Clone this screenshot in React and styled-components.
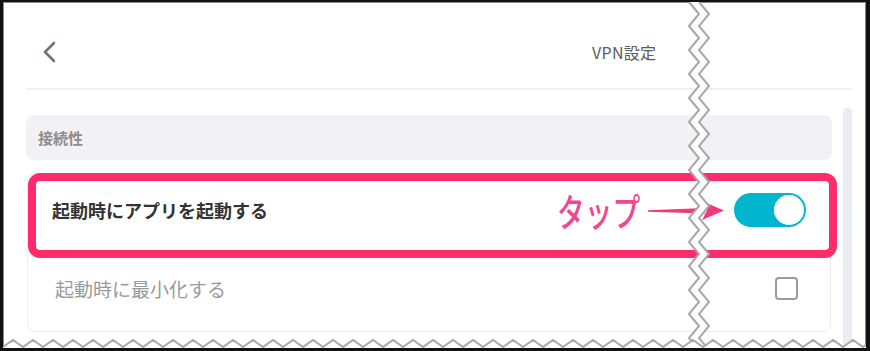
import React from "react";
import styled, { createGlobalStyle } from "styled-components";

const GlobalStyle = createGlobalStyle`
  body {
    margin: 0;
    background: #fff;
    font-family: "Noto Sans CJK JP", "Noto Sans", sans-serif;
  }
`;

const Frame = styled.div`
  position: relative;
  width: 870px;
  height: 351px;
  box-sizing: border-box;
  border-style: solid;
  border-color: #111;
  border-width: 2px 4px 3px 3px;
  box-shadow: inset 1px 1px 0 #8a8a8a, inset -1px 0 0 #8a8a8a;
  background: #fff;
  overflow: hidden;
`;

const Screen = styled.div`
  display: flex;
  flex-direction: column;
  height: 100%;
  padding: 0 14px 0 23px;
`;

const Header = styled.header`
  display: flex;
  align-items: center;
  height: 72px;
  padding: 14px 0 0 16px;
  border-bottom: 2px solid #f1f1f5;
`;

const BackIcon = styled.svg`
  width: 14px;
  height: 22px;
  flex-shrink: 0;
`;

const Title = styled.h1`
  margin: 0 0 0 536px;
  font-size: 16px;
  font-weight: 400;
  letter-spacing: 0.3px;
  color: #5c5c5c;
`;

const Body = styled.div`
  display: flex;
  gap: 11px;
  flex: 1;
`;

const Column = styled.div`
  width: 806px;
  padding-top: 25px;
`;

const ScrollTrack = styled.div`
  width: 9px;
  margin-top: 18px;
  flex-shrink: 0;
  border-radius: 4px 4px 0 0;
  background: #e9ecf0;
`;

const SectionHeader = styled.div`
  display: flex;
  align-items: center;
  height: 45px;
  padding-left: 12px;
  border-radius: 8px;
  background: #f2f2f6;
  font-size: 15px;
  font-weight: 700;
  color: #8d8d8d;
`;

const Card = styled.div`
  margin: 13px 1px 0;
  border: 1px solid #eceef3;
  border-radius: 8px;
  background: #fff;
`;

const Row = styled.div`
  position: relative;
  display: flex;
  align-items: center;
  justify-content: space-between;
  height: ${(p) => p.$h}px;
  padding: 0 ${(p) => p.$pr}px 0 ${(p) => p.$pl}px;
`;

const Label = styled.span`
  font-size: ${(p) => (p.$muted ? 19 : 18)}px;
  font-weight: ${(p) => (p.$muted ? 400 : 700)};
  color: ${(p) => (p.$muted ? "#9a9a9a" : "#333")};
`;

const Toggle = styled.div`
  display: flex;
  justify-content: flex-end;
  align-items: center;
  width: 72px;
  height: 34px;
  padding: 0 2px;
  box-sizing: border-box;
  border-radius: 17px;
  background: #00b5cd;
`;

const Knob = styled.div`
  width: 30px;
  height: 30px;
  border-radius: 50%;
  background: #fff;
  box-shadow: inset 0 0 0 1px #d9f2f6;
`;

const Checkbox = styled.div`
  width: 23px;
  height: 23px;
  box-sizing: border-box;
  border: 2px solid #9b9b9b;
  border-radius: 4px;
`;

const Highlight = styled.div`
  position: absolute;
  inset: -1px -7px -12px 0;
  border: 8px solid #ff2b6b;
  border-radius: 12px;
  pointer-events: none;
`;

const TapLabel = styled.span`
  position: absolute;
  left: 529px;
  top: 17px;
  font-size: 38px;
  font-weight: 500;
  line-height: 1;
  color: #f2468f;
  white-space: nowrap;
  transform: scaleX(0.73);
  transform-origin: left center;
`;

const Arrow = styled.svg`
  position: absolute;
  left: 619px;
  top: 26px;
  width: 78px;
  height: 22px;
`;

const ZigzagV = styled.svg`
  position: absolute;
  top: 0;
  left: 683px;
  width: 26px;
  height: 100%;
`;

const ZigzagH = styled.svg`
  position: absolute;
  left: 0;
  bottom: 0;
  width: 100%;
  height: 10px;
`;

function verticalZig() {
  const left = [];
  const right = [];
  for (let i = 0; i <= 30; i++) {
    const y = i * 12;
    const x = i % 2 === 0 ? 3 : 13;
    left.push(`${x},${y}`);
    right.push(`${x + 10},${y}`);
  }
  return { left, right };
}

function horizontalZig() {
  const pts = [];
  for (let i = 0; i <= 88; i++) {
    const x = i * 10;
    const y = i % 2 === 0 ? 9 : 2;
    pts.push(`${x},${y}`);
  }
  return pts;
}

export default function App() {
  const v = verticalZig();
  const h = horizontalZig();
  return (
    <>
      <GlobalStyle />
      <Frame>
        <Screen>
          <Header>
            <BackIcon viewBox="0 0 14 22">
              <polyline
                points="12,2 3,11 12,20"
                fill="none"
                stroke="#6b7280"
                strokeWidth="2.6"
                strokeLinecap="round"
                strokeLinejoin="round"
              />
            </BackIcon>
            <Title>VPN設定</Title>
          </Header>
          <Body>
            <Column>
              <SectionHeader>接続性</SectionHeader>
              <Card>
                <Row $h={72} $pl={24} $pr={24}>
                  <Label>起動時にアプリを起動する</Label>
                  <Toggle>
                    <Knob />
                  </Toggle>
                  <Highlight />
                  <TapLabel>タップ</TapLabel>
                  <Arrow viewBox="0 0 78 22">
                    <polygon points="1,10.2 58,8 58,13.4 1,11.8" fill="#f23a7a" />
                    <polygon points="55,1 77,10.5 55,20 60,10.5" fill="#f23a7a" />
                  </Arrow>
                </Row>
                <Row $h={85} $pl={27} $pr={32}>
                  <Label $muted>起動時に最小化する</Label>
                  <Checkbox />
                </Row>
              </Card>
            </Column>
            <ScrollTrack />
          </Body>
        </Screen>
        <ZigzagV viewBox="0 0 26 346" preserveAspectRatio="none">
          <polygon points={[...v.left, ...[...v.right].reverse()].join(" ")} fill="#fff" />
          <polyline points={v.left.join(" ")} fill="none" stroke="#a8a8a8" strokeWidth="2" />
          <polyline points={v.right.join(" ")} fill="none" stroke="#a8a8a8" strokeWidth="2" />
        </ZigzagV>
        <ZigzagH viewBox="0 0 863 10" preserveAspectRatio="none">
          <polygon points={`0,10 ${h.join(" ")} 880,10`} fill="#fff" />
          <polyline points={h.join(" ")} fill="none" stroke="#a8a8a8" strokeWidth="2" />
        </ZigzagH>
      </Frame>
    </>
  );
}
